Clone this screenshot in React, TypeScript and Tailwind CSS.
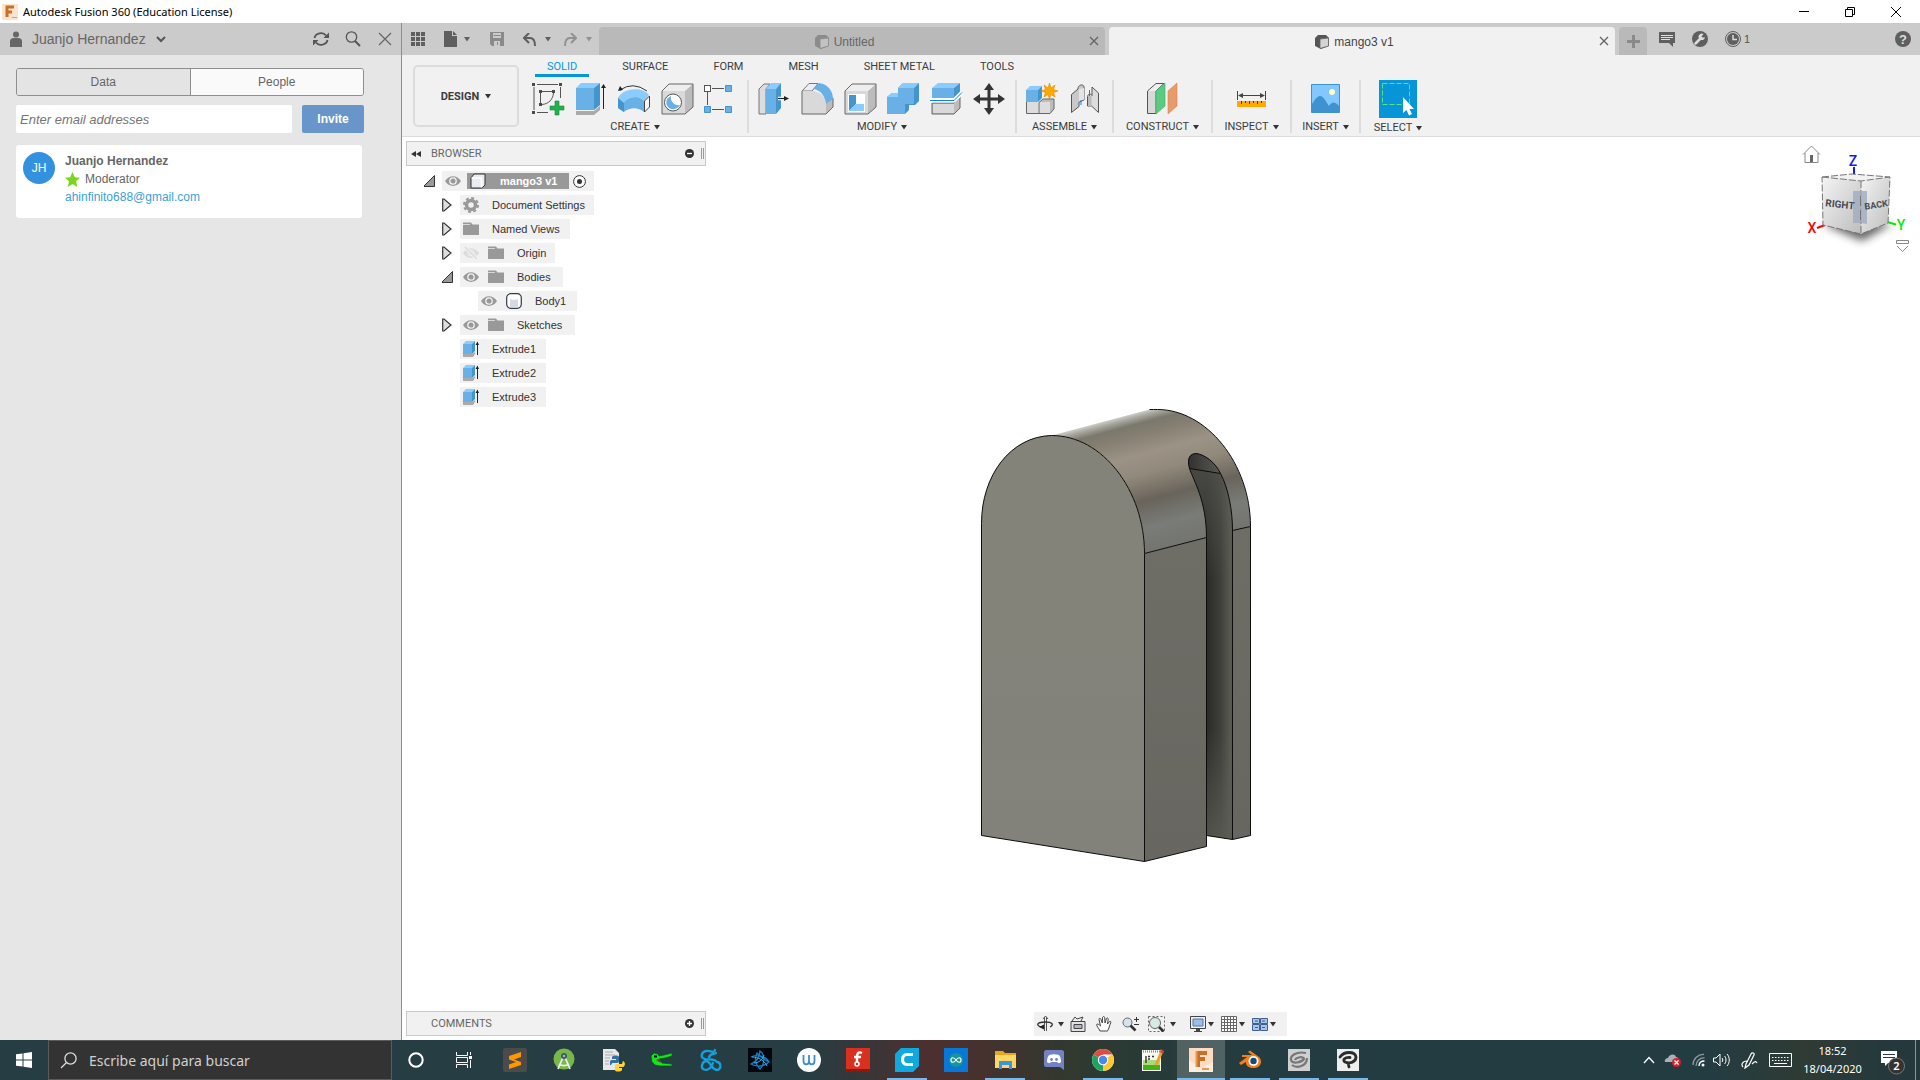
import React, { useState } from 'react';

type IconProps = { size?: number; w?: number; h?: number; className?: string; children: React.ReactNode };

// Every glyph is drawn on a grid of its own pixel size
const Ico = ({ size = 16, w, h, className = '', children }: IconProps) => (
  <svg
    width={w ?? size}
    height={h ?? size}
    viewBox={`0 0 ${w ?? size} ${h ?? size}`}
    className={`shrink-0 ${className}`}
    fill="none"
    aria-hidden="true"
  >
    {children}
  </svg>
);

const Caret = ({ className = 'text-[#333]' }: { className?: string }) => (
  <Ico w={6} h={5} className={className}>
    <path d="M0 0H6L3 4.500Z" fill="currentColor" />
  </Ico>
);

/* ---------- Ribbon icons ---------- */

const SketchIcon = () => (
  <Ico size={34}>
    <path d="M5 2.500H26M2 5V28M28.500 5V16M5 30.500H16M10 9.500H20M8.500 11V21M21.500 11C21 17 17 22 10 22.500" stroke="#555" />
    <path d="M0 1h3v3H0zM27 1h3v3h-3zM0 29h3v3H0zM7 8h3v3H7zM20 8h3v3h-3zM7 21h3v3H7z" fill="#4a4a4a" />
    <path d="M23 19h4v5h5v4h-5v5h-4v-5h-5v-4h5z" fill="#22b14c" stroke="#168a3a" strokeWidth=".6" />
  </Ico>
);

const ExtrudeIcon = () => (
  <Ico size={34}>
    <path d="M1 29H19L25 24V28L19 33H1Z" fill="#aaa" />
    <path d="M1 6H19V28H1Z" fill="#69b0e6" />
    <path d="M1 6L6 1H25L19 6Z" fill="#8accff" />
    <path d="M19 6L25 1V23L19 28Z" fill="#4494cd" />
    <path d="M28.500 4V27" stroke="#222" />
    <path d="M26 6L28.500 2L31 6Z" fill="#222" />
  </Ico>
);

const RevolveIcon = () => (
  <Ico size={34}>
    <path d="M0 16C6 5 25 5 31 13L26 19C21 13 11 14 5 21Z" fill="#8accff" />
    <path d="M5 21C11 14 21 13 26 19V30C20 25 12 25 6 30L0 26V16Z" fill="#69b0e6" />
    <path d="M0 16L6 21V30L0 26Z" fill="#4494cd" />
    <path d="M26.500 19L31.500 14V25L26.500 30Z" fill="#f7f7f7" stroke="#444" />
    <path d="M2 8Q15 -1 29 9" stroke="#333" />
    <path d="M0 9L2 4L5 8Z" fill="#222" />
  </Ico>
);

const Block = () => (
  <>
    <path d="M1 9L8 2H32L24 9Z" fill="#eee" />
    <path d="M1 9H24V32H1Z" fill="#d9d9d9" />
    <path d="M24 9L32 2V25L24 32Z" fill="#bcbcbc" />
    <path d="M1 9L8 2H32V25L24 32H1Z" stroke="#666" />
  </>
);

const HoleIcon = () => (
  <Ico size={34}>
    <Block />
    <circle cx="12" cy="20.500" r="8.500" fill="#fff" stroke="#555" />
    <path d="M10 14C5 16 4 21 7 25C11 29 17 27 19 23C14 24 9 20 10 14Z" fill="#69b0e6" />
  </Ico>
);

const PatternIcon = () => (
  <Ico size={34}>
    <path d="M8 6.500H20M8 27.500H20M3.500 10V23" stroke="#555" />
    <rect x=".5" y="3.500" width="6" height="6" fill="#fff" stroke="#555" />
    <path d="M21.500 3.500h6v6h-6zM21.500 24.500h6v6h-6zM.5 24.500h6v6h-6z" fill="#69b0e6" stroke="#4494cd" />
  </Ico>
);

const PressPullIcon = () => (
  <Ico size={34}>
    <path d="M1 7L6 2H12L8 7V32H1Z" fill="#ddd" stroke="#777" />
    <path d="M8 7H18V32H8Z" fill="#69b0e6" />
    <path d="M8 7L13 1H23L18 7Z" fill="#8accff" />
    <path d="M18 7L23 1V26L18 32Z" fill="#4494cd" />
    <path d="M20 16.500H27" stroke="#fff" strokeWidth="3.500" />
    <path d="M20 16.500H27" stroke="#222" strokeWidth="1.200" />
    <path d="M26 14L31 16.500L26 19Z" fill="#222" />
  </Ico>
);

const FilletIcon = () => (
  <Ico size={34}>
    <path d="M1 9L8 1.500H17L11 9Z" fill="#eee" stroke="#777" />
    <path d="M1 9H10C20 9 25 16 25 24V32H1Z" fill="#d9d9d9" />
    <path d="M25 22L32 15V25L25 32Z" fill="#bcbcbc" />
    <path d="M1 9V32H25L32 25V16" stroke="#666" />
    <path d="M12 7L18 1C27 2 32 9 32 17L25 22C24 14 20 8 12 7Z" fill="#69b0e6" />
  </Ico>
);

const ShellIcon = () => (
  <Ico size={34}>
    <Block />
    <path d="M4 12H21V30H4Z" fill="#fff" />
    <path d="M5 13H12V22L5 29Z" fill="#4494cd" />
    <path d="M12 22H20V29H5Z" fill="#8accff" />
  </Ico>
);

const CombineIcon = () => (
  <Ico size={34}>
    <path d="M0 15L5 11H11V6L16 1H32V19L28 23H22V28L18 32H0Z" fill="#4494cd" />
    <path d="M0 15H11V6H27V22H18V32H0Z" fill="#69b0e6" />
    <path d="M0 15L5 11H11V15ZM11 6L16 1H32L27 6Z" fill="#8accff" />
  </Ico>
);

const SplitIcon = () => (
  <Ico size={34}>
    <path d="M2 21H24L30 14V26L24 32H2Z" fill="#bcbcbc" stroke="#666" />
    <path d="M3 22H24V31H3Z" fill="#d9d9d9" />
    <path d="M2 6H24V16H2Z" fill="#69b0e6" />
    <path d="M2 6L8 1H30L24 6Z" fill="#8accff" />
    <path d="M24 6L30 1V11L24 16Z" fill="#4494cd" />
    <path d="M0 18.500H24L32 10.500" stroke="#fff" strokeWidth="4" />
    <path d="M0 18.500H24L32 10.500" stroke="#0a84dc" />
  </Ico>
);

const MoveIcon = () => (
  <Ico size={34}>
    <path d="M16 6V28M5 17H27" stroke="#333" strokeWidth="3" />
    <path d="M16 1L21 8H11ZM16 33L21 26H11ZM0 17L7 12V22ZM32 17L25 12V22Z" fill="#333" />
  </Ico>
);

const AssembleIcon = () => (
  <Ico size={34}>
    <path d="M0 20H12V32H0Z" fill="#ddd" />
    <path d="M13 20L17 17H28V27L24 32H13Z" fill="#bcbcbc" />
    <path d="M13 20H24V32H13Z" fill="#ddd" />
    <path d="M.5 20V31.500H24L28 27V17H17L13 20.500V31" stroke="#666" />
    <path d="M0 8H12V20H0Z" fill="#69b0e6" />
    <path d="M0 8L4 4H16L12 8Z" fill="#8accff" />
    <path d="M12 8L16 4V16L12 20Z" fill="#4494cd" />
    <path d="M23.500 1L25 6L29 3L27.500 7.500L32 9L27.500 10.500L29 15L25 12.500L23.500 17L22 12.500L18 15L19.500 10.500L15 9L19.500 7.500L18 3L22 6Z" fill="#ffa800" stroke="#e08a00" strokeWidth=".6" />
  </Ico>
);

const JointIcon = () => (
  <Ico size={34}>
    <path d="M2.500 12.500L9 7C9 2 15 2 15 5V18L10 20V24.500L2.500 30.500Z" fill="#c9c9c9" stroke="#555" />
    <path d="M10 7L15 6V17.500L10 19.500Z" fill="#e4e4e4" />
    <path d="M29.500 30.500L22.500 24H18.500V14.500C19 11.500 22 11.500 23 13.500V5L29.500 11Z" fill="#dcdcdc" stroke="#555" />
    <path d="M19 14H22.500V24H19Z" fill="#bbb" />
    <path d="M12 18V23M20.500 8V14" stroke="#0a84dc" />
  </Ico>
);

const ConstructIcon = () => (
  <Ico size={34}>
    <path d="M1.500 9L10 1.500H18L10 9V31.500H1.500Z" fill="#eee" stroke="#555" />
    <path d="M2 9H9V31H2Z" fill="#d9d9d9" />
    <path d="M10 9L19 1V24L10 32Z" fill="#5bcb82" stroke="#3da863" strokeWidth=".6" />
    <path d="M22 9L31 1V24L22 32Z" fill="#e99a6b" stroke="#d98453" strokeWidth=".6" />
  </Ico>
);

const InspectIcon = () => (
  <Ico size={34}>
    <path d="M2.500 9V18M30.500 9V18M4 13.500H29" stroke="#444" />
    <path d="M3 13.500L8 11V16ZM30 13.500L25 11V16Z" fill="#444" />
    <path d="M2 19H31V25H2Z" fill="#ffa800" />
    <path d="M6.500 19v3M10.500 19v2M14.500 19v3M18.500 19v2M22.500 19v3M26.500 19v2" stroke="#5a3c00" />
  </Ico>
);

const InsertIcon = () => (
  <Ico size={34}>
    <path d="M2.500 2.500H30.500V30.500H2.500Z" fill="#80c8ff" stroke="#3e92cf" />
    <path d="M3 22C7 16 9 14 11 14C15 14 18 22 20 24C23 20 25 19 30 24V30H3Z" fill="#3e92cf" />
    <circle cx="23" cy="10" r="3" fill="#ffffc8" />
  </Ico>
);

const SelectIcon = () => (
  <Ico size={38}>
    <path d="M0 0H38V38H0Z" fill="#0696d7" />
    <path d="M3.500 3.500H30.500V24.500H3.500Z" stroke="#5be08a" strokeDasharray="5 2" />
    <path d="M24 17V33L27.500 30L30 35.500L33 34L30.500 29H35Z" fill="#fff" />
  </Ico>
);

const RIBBON = [
  { label: 'CREATE', width: 'w-[226px]', icons: [SketchIcon, ExtrudeIcon, RevolveIcon, HoleIcon, PatternIcon] },
  { label: 'MODIFY', width: 'w-[268px]', icons: [PressPullIcon, FilletIcon, ShellIcon, CombineIcon, SplitIcon, MoveIcon] },
  { label: 'ASSEMBLE', width: 'w-[97px]', icons: [AssembleIcon, JointIcon] },
  { label: 'CONSTRUCT', width: 'w-[99px]', icons: [ConstructIcon] },
  { label: 'INSPECT', width: 'w-[79px]', icons: [InspectIcon] },
  { label: 'INSERT', width: 'w-[69px]', icons: [InsertIcon] },
  { label: 'SELECT', width: 'w-[74px]', icons: [SelectIcon] },
];

const WORKSPACE_TABS = ['SOLID', 'SURFACE', 'FORM', 'MESH', 'SHEET METAL', 'TOOLS'];

/* ---------- Browser tree icons ---------- */

const Eye = () => (
  <Ico className="text-[#999]">
    <path d="M0 8C4 1.500 12 1.500 16 8C12 14.500 4 14.500 0 8Z" fill="currentColor" />
    <circle cx="8" cy="8" r="3.200" stroke="#f1f1f1" strokeWidth="1.300" />
  </Ico>
);

const EyeOff = () => (
  <Ico className="text-[#dcdcdc]">
    <path d="M0 8C4 1.500 12 1.500 16 8C12 14.500 4 14.500 0 8Z" fill="currentColor" />
    <circle cx="8" cy="8" r="3" stroke="#f1f1f1" />
    <path d="M2 2L14 14" stroke="#f1f1f1" strokeWidth="3.500" />
    <path d="M2 2L14 14" stroke="currentColor" strokeWidth="1.500" />
  </Ico>
);

const Folder = () => (
  <Ico>
    <path d="M0 1.500H8L9.500 3.500H16V14H0Z" fill="#999" />
    <path d="M0 3.500H7" stroke="#d8d8d8" />
  </Ico>
);

const Gear = () => (
  <Ico>
    <circle cx="8" cy="8" r="4.500" stroke="#999" strokeWidth="3.500" />
    <circle cx="8" cy="8" r="7" stroke="#999" strokeWidth="2" strokeDasharray="3 2.500" />
  </Ico>
);

const Component = () => (
  <Ico>
    <path d="M1 5L4 1H15V12L12 15H1Z" fill="#e9ebf2" stroke="#333" />
    <path d="M1.500 5H11.500V14.500" stroke="#fff" strokeWidth="1.500" />
  </Ico>
);

const BodyIcon = () => (
  <Ico>
    <rect x=".7" y=".7" width="14.600" height="14.600" rx="4" fill="#fff" stroke="#333a4a" strokeWidth="1.200" />
    <path d="M4 6C6 7 10 7 12 6V14H4Z" fill="#d4d9e4" />
  </Ico>
);

const ExtrudeSmall = () => (
  <Ico>
    <path d="M0 13H9L12 11V13L10 16H0Z" fill="#aaa" />
    <path d="M0 3H9V13H0Z" fill="#69b0e6" />
    <path d="M0 3L3 0H12L9 3Z" fill="#8accff" />
    <path d="M9 3L12 0V10L9 13Z" fill="#4494cd" />
    <path d="M14.500 2V14" stroke="#222" />
    <path d="M12.500 4L14.500 .5L16 4Z" fill="#222" />
  </Ico>
);

const ArrowClosed = () => (
  <Ico w={12} h={14}>
    <path d="M.7 1H2L9 7L2 13H.7Z" fill="#ddd" stroke="#333" strokeWidth="1.200" />
  </Ico>
);

const ArrowOpen = () => (
  <Ico w={12} h={12}>
    <path d="M10.500 .5V11.500H-.5Z" fill="#999" stroke="#333" />
  </Ico>
);

type Node = { name: string; nested?: boolean; arrow?: 'open' | 'closed'; icons: React.FC[]; width: string };

const TREE: Node[] = [
  { name: 'Document Settings', arrow: 'closed', icons: [Gear], width: 'w-[134px]' },
  { name: 'Named Views', arrow: 'closed', icons: [Folder], width: 'w-[110px]' },
  { name: 'Origin', arrow: 'closed', icons: [EyeOff, Folder], width: 'w-[95px]' },
  { name: 'Bodies', arrow: 'open', icons: [Eye, Folder], width: 'w-[103px]' },
  { name: 'Body1', nested: true, icons: [Eye, BodyIcon], width: 'w-[99px]' },
  { name: 'Sketches', arrow: 'closed', icons: [Eye, Folder], width: 'w-[115px]' },
  { name: 'Extrude1', icons: [ExtrudeSmall], width: 'w-[86px]' },
  { name: 'Extrude2', icons: [ExtrudeSmall], width: 'w-[86px]' },
  { name: 'Extrude3', icons: [ExtrudeSmall], width: 'w-[86px]' },
];

const TitleBar = () => (
  <header className="flex h-[23px] shrink-0 items-center bg-white pr-px font-['Noto_Sans','Open_Sans',sans-serif]">
    <Ico className="ml-[2px] mr-[5px]">
      <path d="M0 0H16V16H0Z" fill="#fbe3cd" />
      <path d="M5 13V3H12M5 8H10" stroke="#c8702a" strokeWidth="3" />
      <path d="M10 13.500H15" stroke="#e79b52" />
    </Ico>
    <h1 className="flex-1 text-[11px] leading-none text-black">Autodesk Fusion 360 (Education License)</h1>
    <button aria-label="Minimize" className="flex w-[46px] justify-center">
      <Ico size={10}><path d="M0 4.500H10" stroke="#000" /></Ico>
    </button>
    <button aria-label="Restore" className="flex w-[46px] justify-center">
      <Ico size={10}><path d="M.5 2.500H7.500V9.500H.5ZM2.500 2.500V.5H9.500V7.500H7.500" stroke="#000" /></Ico>
    </button>
    <button aria-label="Close" className="flex w-[46px] justify-center">
      <Ico size={10}><path d="M0 0L10 10M10 0L0 10" stroke="#000" /></Ico>
    </button>
  </header>
);

const PeoplePanel = () => {
  const [tab, setTab] = useState('People');

  return (
    <aside className="w-[402px] shrink-0 border-r border-[#8e8e8e] bg-[#e6e6e6] text-[#666]">
      <div className="flex h-8 items-center bg-[#cbcbcb] pl-[10px] pr-2">
        <Ico w={12} h={16}>
          <circle cx="6" cy="3.500" r="3" fill="#666" />
          <path d="M0 16V10C0 8 2 7 3.500 7H8.500C10 7 12 8 12 10V16Z" fill="#666" />
        </Ico>
        <button className="ml-[10px] flex items-center gap-[10px] text-sm">
          Juanjo Hernandez
          <Ico w={10} h={7}><path d="M1 1L5 5L9 1" stroke="#555" strokeWidth="2" /></Ico>
        </button>
        <div className="ml-auto flex items-center gap-4">
          <button aria-label="Refresh">
            <Ico>
              <path d="M1.500 7C2.500 2 10 .5 13 4.500M14.500 9C13.500 14 6 15.500 3 11.500" stroke="#555" strokeWidth="1.800" />
              <path d="M16 1.500V7H10.500ZM0 14.500V9H5.500Z" fill="#555" />
            </Ico>
          </button>
          <button aria-label="Search">
            <Ico>
              <circle cx="6.500" cy="6" r="5.200" stroke="#555" strokeWidth="1.300" />
              <path d="M10 10L15 15" stroke="#555" strokeWidth="2" />
            </Ico>
          </button>
          <button aria-label="Close panel">
            <Ico><path d="M2 2L14 14M14 2L2 14" stroke="#666" strokeWidth="1.200" /></Ico>
          </button>
        </div>
      </div>

      <div className="px-4 pt-[13px]">
        <div className="mr-[21px] flex h-7 overflow-hidden rounded-[3px] border border-[#8e8e8e] text-xs">
          {['Data', 'People'].map((t) => (
            <button
              key={t}
              onClick={() => setTab(t)}
              className={`flex-1 ${t === 'People' ? 'border-l border-[#8e8e8e]' : ''} ${tab === t ? 'bg-[#fafafa]' : 'bg-[#e4e4e4]'}`}
            >
              {t}
            </button>
          ))}
        </div>
        <form className="mr-[21px] mt-[9px] flex h-7 gap-[10px]" onSubmit={(e) => e.preventDefault()}>
          <input
            type="email"
            aria-label="Enter email addresses"
            placeholder="Enter email addresses"
            className="min-w-0 flex-1 rounded-[2px] bg-white px-1 pt-px text-[13px] italic placeholder:text-[#757575]"
          />
          <button className="w-[62px] rounded-[2px] bg-[#6996ca] text-xs font-bold text-white">Invite</button>
        </form>
        <div className="mr-[23px] mt-3 flex h-[73px] rounded-[3px] bg-white pl-[7px] pt-[7px] text-xs leading-[18px]">
          <div className="flex size-8 items-center justify-center rounded-full bg-[#3392df] text-white">JH</div>
          <div className="ml-[10px]">
            <p className="font-bold">Juanjo Hernandez</p>
            <p className="flex items-center gap-[5px]">
              <Ico size={15}>
                <path d="M7.500 0L9.800 5.200L15 5.700L11 9.300L12.300 15L7.500 11.900L2.700 15L4 9.300L0 5.700L5.200 5.200Z" fill="#7ad51c" />
              </Ico>
              Moderator
            </p>
            <a href="mailto:ahinfinito688@gmail.com" className="text-[#3c9fd9]">ahinfinito688@gmail.com</a>
          </div>
        </div>
      </div>
    </aside>
  );
};

const DocIcon = ({ dark }: { dark?: boolean }) => (
  <Ico>
    <path d="M1 4L4 1H12L15 4V12L7 15L1 12Z" fill={dark ? '#555' : '#8b8b8b'} />
    <path d="M6 5L14.500 4V12L6 14.500Z" fill={dark ? '#d4d4d4' : '#c2c2c2'} stroke={dark ? '#666' : '#8b8b8b'} strokeWidth=".8" />
  </Ico>
);

const CloseX = () => (
  <Ico size={10}><path d="M1 1L9 9M9 1L1 9" stroke="#666" strokeWidth="1.400" /></Ico>
);

const QuickBar = () => (
  <div className="flex h-8 shrink-0 items-center bg-[#cbcbcb] pl-[9px]">
    <div className="flex w-[188px] shrink-0 items-center">
      <button aria-label="Data panel">
        <Ico size={14}>
          <path d="M0 0h4v4H0zM5 0h4v4H5zM10 0h4v4h-4zM0 5h4v4H0zM5 5h4v4H5zM10 5h4v4h-4zM0 10h4v4H0zM5 10h4v4H5zM10 10h4v4h-4z" fill="#5f5f5f" />
        </Ico>
      </button>
      <button aria-label="File" className="ml-[19px] flex items-center gap-[7px]">
        <Ico w={13} h={16}><path d="M0 0H8V5H13V16H0ZM9 0L13 4H9Z" fill="#5f5f5f" /></Ico>
        <Caret className="text-[#5f5f5f]" />
      </button>
      <button aria-label="Save" className="ml-5">
        <Ico size={14}>
          <path d="M0 0H14V14H2L0 12Z" fill="#8a8a8a" />
          <path d="M3 1H11V6H3ZM4 9H10V14H4Z" fill="#cbcbcb" />
          <path d="M3.500 3.500H10.500M7.500 10V13" stroke="#8a8a8a" />
        </Ico>
      </button>
      <button aria-label="Undo" className="ml-[19px] flex items-center gap-[9px]">
        <Ico size={13}>
          <path d="M2 5H7C11 5 12 8 12 13" stroke="#5f5f5f" strokeWidth="2" />
          <path d="M6 0L1 5L6 10" stroke="#5f5f5f" strokeWidth="2" />
        </Ico>
        <Caret className="text-[#5f5f5f]" />
      </button>
      <button aria-label="Redo" className="ml-[13px] flex items-center gap-[9px]">
        <Ico size={13}>
          <path d="M11 5H6C2 5 1 8 1 13" stroke="#929292" strokeWidth="2" />
          <path d="M7 0L12 5L7 10" stroke="#929292" strokeWidth="2" />
        </Ico>
        <Caret className="text-[#929292]" />
      </button>
    </div>

    <div className="flex h-7 min-w-0 flex-1 gap-1 self-end text-xs text-[#555]">
      <div className="flex flex-1 items-center rounded-t-[4px] bg-[#b9b9b9] pr-[6px]">
        <button className="flex flex-1 items-center justify-center gap-1 pt-px text-[#666]"><DocIcon />Untitled</button>
        <button aria-label="Close Untitled"><CloseX /></button>
      </div>
      <div className="flex flex-1 items-center rounded-t-[4px] bg-[#f1f1f1] pr-[6px]">
        <button className="flex flex-1 items-center justify-center gap-1 pt-px text-[#444]"><DocIcon dark />mango3 v1</button>
        <button aria-label="Close mango3 v1"><CloseX /></button>
      </div>
    </div>
    <button aria-label="New tab" className="ml-1 flex h-7 w-7 shrink-0 items-center justify-center self-end rounded-t-[4px] bg-[#b9b9b9]">
      <Ico size={13}><path d="M6.500 0V13M0 6.500H13" stroke="#8a8a8a" strokeWidth="3" /></Ico>
    </button>
    <div className="flex w-[273px] shrink-0 items-center pl-3 pr-[9px] text-[11px] text-[#555]">
      <button aria-label="Comments">
        <Ico>
          <path d="M0 1H16V12H14V16L10 12H0Z" fill="#5f5f5f" />
          <path d="M2 4.500H14M2 6.500H14M2 8.500H11" stroke="#ddd" />
        </Ico>
      </button>
      <button aria-label="Tools" className="ml-[17px]">
        <Ico>
          <circle cx="8" cy="8" r="8" fill="#5f5f5f" />
          <path d="M3.500 12.500L9 7" stroke="#ddd" strokeWidth="2.500" strokeLinecap="round" />
          <path d="M11.500 3A3.300 3.300 0 1 0 13 6.500L10.500 6.500L9.500 5.500Z" fill="#ddd" />
        </Ico>
      </button>
      <button className="ml-[17px] flex items-center gap-[3px]">
        <Ico>
          <circle cx="8" cy="8" r="7.500" stroke="#5f5f5f" />
          <circle cx="8" cy="8" r="6" fill="#5f5f5f" />
          <path d="M8 4V8.500H12" stroke="#ddd" strokeWidth="1.500" />
        </Ico>
        1
      </button>
      <button aria-label="Help" className="ml-auto flex size-4 items-center justify-center rounded-full bg-[#5f5f5f] text-[13px] leading-none font-bold text-[#ddd]">?</button>
    </div>
  </div>
);

const Ribbon = () => (
  <div className="flex h-[82px] shrink-0 border-b border-[#dcdcdc] bg-[#f1f1f1] pl-[11px] font-[Roboto,sans-serif] text-[11px] leading-3 text-[#3c3c3c]">
    <button className="mt-[10px] flex h-[62px] w-[106px] shrink-0 items-center justify-center gap-[6px] rounded-[5px] border-2 border-[#dcdcdc] pt-px font-bold">
      DESIGN <Caret />
    </button>
    <div className="pl-1">
      <nav className="ml-3 flex gap-[21px]">
        {WORKSPACE_TABS.map((t) => (
          <button
            key={t}
            className={`h-[22px] border-b-[3px] px-3 pt-1 ${t === 'SOLID' ? 'border-[#0696d7] text-[#0696d7]' : 'border-transparent'}`}
          >
            {t}
          </button>
        ))}
      </nav>
      <div className="mt-[3px] flex">
        {RIBBON.map(({ label, width, icons }, i) => (
          <section
            key={label}
            className={`flex h-[53px] flex-col items-center border-[#dcdcdc] ${width} ${i < RIBBON.length - 1 ? 'border-r-2' : ''}`}
          >
            <div className="flex h-[38px] items-center gap-[9px]">
              {icons.map((Icon, n) => (
                <button key={n} aria-label={`${label} ${n + 1}`}>
                  <Icon />
                </button>
              ))}
            </div>
            <button className="mt-1 flex items-center gap-1">
              {label} <Caret />
            </button>
          </section>
        ))}
      </div>
    </div>
  </div>
);

const PanelBar = ({ title, open }: { title: string; open?: boolean }) => (
  <div className="flex h-[25px] w-[300px] items-center border border-[#c9c9c9] bg-[#f1f1f1] font-[Roboto,sans-serif] text-[11px] text-[#666]">
    <div className="w-6 pl-1">
      {open && (
        <Ico w={10} h={6}><path d="M5 0V6L0 3ZM10 0V6L5 3Z" fill="#333" /></Ico>
      )}
    </div>
    <h2 className="flex-1 pt-px">{title}</h2>
    <button aria-label={open ? 'Collapse' : 'Expand'}>
      <Ico size={9}>
        <circle cx="4.500" cy="4.500" r="4.500" fill="#333" />
        <path d={open ? 'M2 4.500H7' : 'M2 4.500H7M4.500 2V7'} stroke="#fff" strokeWidth="1.300" />
      </Ico>
    </button>
    <div className="ml-[7px] mr-px h-[11px] w-[3px] border-x border-[#999]" />
  </div>
);

const BrowserTree = () => (
  <div className="pl-[18px] pt-[5px] text-[11px] text-[#333]">
    <div className="mb-1 flex h-5 items-center">
      <div className="w-[18px]"><ArrowOpen /></div>
      <div className="flex h-5 w-[152px] items-center bg-[#f1f1f1] pl-[3px]">
        <Eye />
        <button className="ml-[6px] flex h-4 w-[102px] items-center bg-[#999] pl-[3px] font-bold text-white">
          <Component />
          <span className="ml-[14px]">mango3 v1</span>
        </button>
        <Ico size={13} className="ml-1">
          <circle cx="6.500" cy="6.500" r="5.900" stroke="#333" fill="#fff" />
          <circle cx="6.500" cy="6.500" r="2.500" fill="#333" />
        </Ico>
      </div>
    </div>
    {TREE.map((node) => (
      <div key={node.name} className={`mb-1 flex h-5 items-center ${node.nested ? 'pl-[54px]' : 'pl-[18px]'}`}>
        {!node.nested && (
          <div className="w-[18px]">
            {node.arrow === 'closed' && <ArrowClosed />}
            {node.arrow === 'open' && <ArrowOpen />}
          </div>
        )}
        <button className={`flex h-5 items-center bg-[#f1f1f1] pl-[3px] text-left whitespace-nowrap ${node.width}`}>
          {node.icons.map((Icon, n) => (
            <span key={n} className="mr-[9px]"><Icon /></span>
          ))}
          <span className="ml-1">{node.name}</span>
        </button>
      </div>
    ))}
  </div>
);

// Handle with the rounded top and the vertical slot on its right side
const Model = () => (
  <svg width="276" height="462" viewBox="0 0 276 462" fill="none" className="absolute top-[268px] left-[575px]" role="img" aria-label="mango3 body">
    <defs>
      <linearGradient id="dome" gradientUnits="userSpaceOnUse" x1="130" y1="15" x2="166" y2="149">
        <stop offset="0" stopColor="#cfcfca" />
        <stop offset=".03" stopColor="#a9a9a0" />
        <stop offset=".08" stopColor="#7a786c" />
        <stop offset=".17" stopColor="#878073" />
        <stop offset=".3" stopColor="#9c9386" />
        <stop offset=".44" stopColor="#91897b" />
        <stop offset=".63" stopColor="#69645b" />
        <stop offset=".82" stopColor="#7a7c78" />
        <stop offset="1" stopColor="#73746f" />
      </linearGradient>
      <linearGradient id="slot" gradientUnits="userSpaceOnUse" x1="229" y1="0" x2="256" y2="0">
        <stop offset="0" stopColor="#2a2a28" />
        <stop offset=".5" stopColor="#3d3d39" />
        <stop offset=".9" stopColor="#5b5b54" />
        <stop offset="1" stopColor="#4c4c47" />
      </linearGradient>
      <linearGradient id="slotFade" x1="0" y1="0" x2="0" y2="1">
        <stop offset="0" stopColor="#5d5d56" stopOpacity=".6" />
        <stop offset=".3" stopColor="#5d5d56" stopOpacity="0" />
        <stop offset=".7" stopColor="#5d5d56" stopOpacity="0" />
        <stop offset="1" stopColor="#5d5d56" stopOpacity=".8" />
      </linearGradient>
      <linearGradient id="side" x1="0" y1="0" x2="0" y2="1">
        <stop offset="0" stopColor="#6e6d66" />
        <stop offset="1" stopColor="#676660" />
      </linearGradient>
      <linearGradient id="face" x1="0" y1="0" x2="0" y2="1">
        <stop offset=".5" stopColor="#84837a" />
        <stop offset="1" stopColor="#82817b" />
      </linearGradient>
      <linearGradient id="slotTop" x1="0" y1="0" x2="1" y2="0">
        <stop offset="0" stopColor="#31312f" />
        <stop offset="1" stopColor="#5a5a54" />
      </linearGradient>
    </defs>
    <g transform="translate(.5 .5)">
      <path d="M74 30L168 5C172 4 176 4 180 4C229 4 273 58 273 121L167 148C167 85 125 30 74 30Z" fill="url(#dome)" />
      <path d="M167 148L229 132V441L167 456Z" fill="url(#side)" />
      <path d="M255 125L273 121V430L255 434Z" fill="url(#side)" />
      <path d="M229 132C229 95 216 75 212 63C209 52 213 48 219 48C227 49 238 57 243 68C251 83 255 105 255 125V434L229 430Z" fill="url(#slot)" />
      <path d="M229 132C229 95 216 75 212 63L243 68C251 83 255 105 255 125V434L229 430Z" fill="url(#slotFade)" />
      <path d="M212 63C209 52 213 48 219 48C227 49 238 57 243 68Z" fill="url(#slotTop)" />
      <path d="M4 118C4 70 33 31 74 30C125 30 167 85 167 148V456L4 430Z" fill="url(#face)" />
      <g stroke="#0c0c0c">
        <path d="M4 118C4 70 33 31 74 30C125 30 167 85 167 148V456L4 430Z" />
        <path d="M172 4C175 4 177 4 180 4C229 4 273 58 273 121V430L255 434L229 430" />
        <path d="M167 148L229 132C229 95 216 75 212 63C209 52 213 48 219 48C227 49 238 57 243 68C251 83 255 105 255 125L273 121M255 125V434M229 132V441L167 456M212 63L243 68" />
      </g>
    </g>
  </svg>
);

const ViewCube = () => (
  <svg width="120" height="120" viewBox="0 0 120 120" fill="none" className="absolute top-[3px] right-0 font-[Roboto,sans-serif]" role="img" aria-label="View cube">
    <defs>
      <filter id="soft" x="-50%" y="-50%" width="200%" height="200%"><feGaussianBlur stdDeviation="4" /></filter>
      <linearGradient id="cubeL" x1="0" y1="0" x2="1" y2="1">
        <stop offset="0" stopColor="#f4f4f4" />
        <stop offset="1" stopColor="#bdbdbd" />
      </linearGradient>
    </defs>
    <path d="M3 14.500L11.500 6L20 14.500M5 13V22.500H18V13" stroke="#888" />
    <path d="M10 15H13V22H10Z" fill="#666" />
    <path d="M22 84L60 80L92 84L62 101Z" fill="#333" opacity=".75" filter="url(#soft)" />
    <path d="M54 27V35" stroke="#1414ff" strokeWidth="2" />
    <path d="M17 88L25 85" stroke="#f00" strokeWidth="2" />
    <path d="M87 82L96 84.500" stroke="#0e0" strokeWidth="2" />
    <path d="M22 37L52 34L90 37L61 41Z" fill="#f2f2f2" />
    <path d="M22 37L61 41V94L23 85Z" fill="url(#cubeL)" />
    <path d="M61 41L90 37L88 83L61 94Z" fill="url(#cubeL)" />
    <path d="M22 37L52 34L90 37L88 83L61 94L23 85ZM22 37L61 41L90 37M61 41V94" stroke="#777" strokeDasharray="7 2" />
    <path d="M53 51H67V84L61 83H53Z" fill="#a0adbd" opacity=".8" />
    <path d="M60.500 56V66M60.500 70V80" stroke="#777" />
    <g fontWeight="700" textAnchor="middle" fill="#454c56">
      <text x="40" y="68" fontSize="10" transform="rotate(6 41 64)">RIGHT</text>
      <text x="76" y="68" fontSize="9" transform="rotate(-9 76 64)">BACK</text>
    </g>
    <g fontSize="14" fontWeight="500" textAnchor="middle">
      <text x="53" y="26" fill="#1414ff">Z</text>
      <text x="12" y="93" fill="#f00">X</text>
      <text x="101" y="90" fill="#0e0">Y</text>
    </g>
    <path d="M96.500 100.500H108.500V103.500H96.500ZM97 106L102.500 111.500L108 106" stroke="#888" />
  </svg>
);

const NavBar = () => (
  <div className="flex h-6 w-[253px] items-center bg-[#f1f1f1] pl-[3px]">
    <button aria-label="Orbit" className="mr-[6px] flex items-center gap-[5px]">
      <Ico>
        <path d="M7.500 1V15M9.500 1V15M6 3L8.500 0L11 3" stroke="#555" />
        <path d="M4 11C-2 9 1 6 8 6C16 6 17 9 13 11" stroke="#333" strokeWidth="1.300" />
        <path d="M2 11L7 8.500V13.500Z" fill="#222" />
      </Ico>
      <Caret />
    </button>
    <button aria-label="Look at" className="mr-[10px]">
      <Ico>
        <path d="M1 5.500H15V15.500H1Z" fill="#e2e2e6" stroke="#444" />
        <path d="M4 8.500H12V12.500H4Z" fill="#b4b8c4" stroke="#444" />
        <path d="M2 5L5 1L7 3L13 1L11 5" stroke="#444" />
      </Ico>
    </button>
    <button aria-label="Pan" className="mr-[10px]">
      <Ico>
        <path d="M4 15C3 12 0 10 .8 8.300C2 7.500 3.500 9 4.500 10L3 3.500C3 2 4.500 2 5 3.500L6.300 7L6.500 1.500C7 .3 8.500 .3 8.700 1.500L9 7L10.500 2.500C11 1.500 12.300 2 12.200 3.200L11.500 8L13.500 5.500C14.500 5 15.300 5.800 14.800 6.700C13.500 9 13 13 11.500 15Z" fill="#fff" stroke="#444" />
      </Ico>
    </button>
    <button aria-label="Zoom" className="mr-[9px]">
      <Ico w={17} h={16}>
        <circle cx="5.500" cy="6.500" r="4.500" fill="#d5e4ea" stroke="#666" />
        <path d="M8.500 9.500L13.500 14.500" stroke="#333" strokeWidth="2.600" />
        <path d="M12 3.500H17M14.500 1V6M12 8.500H17" stroke="#333" />
      </Ico>
    </button>
    <button aria-label="Fit" className="mr-[14px] flex items-center gap-[5px]">
      <Ico w={17} h={16}>
        <path d="M.5 .5H16.500V15.500H.5Z" stroke="#666" strokeDasharray="2 2" />
        <circle cx="7" cy="7" r="5.500" fill="#d5ece6" stroke="#666" />
        <path d="M11 11L15.500 15.500" stroke="#333" strokeWidth="2.600" />
      </Ico>
      <Caret />
    </button>
    <button aria-label="Display settings" className="mr-[7px] flex items-center gap-[2px]">
      <Ico>
        <path d="M.5 .5H15.500V12.500H.5Z" fill="#eee" stroke="#444" />
        <path d="M3 3H13V10H3Z" fill="#9dbde6" stroke="#5176a8" />
        <path d="M6 13H10V15H12V16H4V15H6Z" fill="#444" />
      </Ico>
      <Caret />
    </button>
    <button aria-label="Grid and snaps" className="mr-[7px] flex items-center gap-[2px]">
      <Ico>
        <path d="M.5 .5H15.500V15.500H.5Z" fill="#fff" />
        <path d="M.5 .5H15.500V15.500H.5ZM3.500 0V16M6.500 0V16M9.500 0V16M12.500 0V16M0 3.500H16M0 6.500H16M0 9.500H16M0 12.500H16" stroke="#666" />
      </Ico>
      <Caret />
    </button>
    <button aria-label="Viewports" className="flex items-center gap-[2px]">
      <Ico>
        <path d="M.5 2.500H7.500V7.500H.5ZM8.500 2.500H15.500V7.500H8.500ZM.5 8.500H7.500V14.500H.5ZM8.500 8.500H15.500V14.500H8.500Z" fill="#a9c4ea" stroke="#3f5f90" />
        <path d="M3 5H6M10 5H13M3 11.500H6M10 11.500H13" stroke="#3f5f90" />
      </Ico>
      <Caret />
    </button>
  </div>
);

/* ---------- Taskbar ---------- */

const Sublime = () => (
  <Ico size={24}>
    <rect width="24" height="24" rx="2" fill="#4b4b4b" />
    <path d="M18 4V9L11 11.500L18 14V17L6 21V16.500L13 14L6 11.500V8Z" fill="#ff9800" />
  </Ico>
);
const AndroidStudio = () => (
  <Ico size={24}>
    <circle cx="12" cy="11" r="10.500" fill="#78b84a" />
    <path d="M12 7L6 21M12 7L18 21M7 16C10 18 14 18 17 16" stroke="#e8eef0" strokeWidth="1.800" />
    <circle cx="12" cy="8" r="3" fill="#455a64" />
    <circle cx="12" cy="8" r="1" fill="#cfd8dc" />
  </Ico>
);
const Python = () => (
  <Ico size={24}>
    <path d="M2 1H14L18 5V22H2Z" fill="#e8e8e8" />
    <path d="M4 4H12M4 7H14M4 10H9M4 13H8M4 16H8" stroke="#aaa" />
    <path d="M9 17V14C9 12 10 12 12 12H15V11H11V9C12 7 18 7 18 9V13C18 15 17 15 15 15H12C10 15 11 18 9 17Z" fill="#3670a0" />
    <path d="M22 13C25 14 24 19 22 19H17V20H21V22C20 24 14 24 14 22V18C14 16 15 16 17 16H20C22 16 21 15 22 13Z" fill="#ffd43b" />
  </Ico>
);
const Croc = () => (
  <Ico size={24}>
    <path d="M1 8L4 5L8 6L9 8L14 7L22 5L22 8L15 10L9 11L12 15L22 16L22 18L10 18L5 17L2 14Z" fill="#12e812" stroke="#052" strokeWidth=".7" />
    <path d="M9 11L12 15L16 16L9 14L6 12Z" fill="#a0187a" />
    <path d="M4 8.500H7" stroke="#012" strokeWidth="2" />
  </Ico>
);
const Knot = () => (
  <Ico size={24}>
    <path d="M16 2C15 6 11 2 7 3C2 4 1 10 6 11C10 12 15 10 18 14C22 14 23 21 18 22C13 22 13 16 8 13C3 13 1 20 5 21.500C9 23 13 19 14 15M10 9C12 4 16 7 17 5" stroke="#14a0dc" strokeWidth="2.300" strokeLinecap="round" />
  </Ico>
);
const BattleNet = () => (
  <Ico size={24}>
    <path d="M0 0H24V24H0Z" fill="#05070c" />
    <path d="M3 9C8 6 18 8 21 14C16 19 8 19 3 16C8 14 12 9 12 3C17 6 17 16 12 21C8 17 6 11 9 5C13 9 18 13 21 14" stroke="#1480c8" strokeWidth="1.300" />
    <path d="M4 9C10 9 16 12 19 18M6 15C10 15 15 12 16 7" stroke="#39b4f0" />
  </Ico>
);
const Wacom = () => (
  <Ico size={24}>
    <circle cx="12" cy="12" r="12" fill="#fff" />
    <path d="M6.500 7V13C6.500 17.500 12 17.500 12 13V7M12 13C12 17.500 17.500 17.500 17.500 13V7" stroke="#3f8fc4" strokeWidth="1.800" />
  </Ico>
);
const Fritzing = () => (
  <Ico size={24}>
    <path d="M0 0H24V24H0Z" fill="#d9301f" />
    <path d="M0 21H24V24H0Z" fill="#8e180d" />
    <path d="M16 5C12 3 11 6 11 9V14M8 9H15" stroke="#fff" strokeWidth="2.400" />
    <circle cx="11" cy="16" r="2" stroke="#fff" strokeWidth="1.500" />
  </Ico>
);
const Cura = () => (
  <Ico size={24}>
    <path d="M6 0H24V18L18 24H0V6Z" fill="#0fa8e0" />
    <path d="M18 6.500H12C6 6.500 6 16.500 12 16.500H18" stroke="#fff" strokeWidth="3.200" />
  </Ico>
);
const Arduino = () => (
  <Ico size={24}>
    <path d="M0 0H24V24H0Z" fill="#0878d8" />
    <circle cx="12" cy="12" r="7" fill="#16959b" />
    <path d="M12 12C10 9 7 9 7 12S10 15 12 12S17 9 17 12S14 15 12 12Z" stroke="#fff" strokeWidth="1.200" />
  </Ico>
);
const Explorer = () => (
  <Ico size={24}>
    <path d="M2 3H10L12 5H23V20H2Z" fill="#e9a51c" />
    <path d="M2 7H23V20H2Z" fill="#ffd766" />
    <path d="M6 13H19V21H16V17H9V21H6Z" fill="#3c96dc" />
  </Ico>
);
const Discord = () => (
  <Ico size={24}>
    <path d="M4 2H20C21 2 22 3 22 4V22L18 19H4C3 19 2 18 2 17V4C2 3 3 2 4 2Z" fill="#7382c4" />
    <path d="M7 7C10 6 14 6 17 7C19 10 19 12 19 14C17 16 16 15 15 14H9C8 15 7 16 5 14C5 12 5 10 7 7Z" fill="#fff" />
    <circle cx="9.500" cy="11.500" r="1.400" fill="#7382c4" />
    <circle cx="14.500" cy="11.500" r="1.400" fill="#7382c4" />
  </Ico>
);
const Chrome = () => (
  <Ico size={24}>
    <circle cx="12" cy="12" r="11" fill="#fff" />
    <path d="M12 12L2.500 6.500A11 11 0 0 1 21.500 6.500H12Z" fill="#de4c3c" />
    <path d="M12 12L21.500 6.500A11 11 0 0 1 12 23Z" fill="#fcc934" />
    <path d="M12 12L12 23A11 11 0 0 1 2.500 6.500Z" fill="#1da462" />
    <circle cx="12" cy="12" r="5.200" fill="#fff" />
    <circle cx="12" cy="12" r="4.200" fill="#4687f4" />
  </Ico>
);
const NotepadPP = () => (
  <Ico size={24}>
    <path d="M2 2H21V23H2Z" fill="#f7f9f2" />
    <path d="M3 12H20V22H3Z" fill="#a8dc7a" />
    <path d="M3 17H20V22H3Z" fill="#46b014" />
    <path d="M3 3.500H20" stroke="#888" strokeDasharray="1 1" strokeWidth="2" />
    <path d="M6 8V15M8 8.500H10M8 11H10M12 8.500H14" stroke="#333" strokeWidth="1.400" />
    <path d="M22 3L16 17" stroke="#f0a024" strokeWidth="3" />
    <path d="M21 1L24 3L23 6L20 4Z" fill="#d8453a" />
  </Ico>
);
const Fusion = () => (
  <Ico size={24}>
    <path d="M0 0H24V24H0Z" fill="#fbdcc0" />
    <path d="M0 24V12L12 20L24 14V24Z" fill="#fdeee0" />
    <path d="M9 19V5H18M9 11H16" stroke="#c46f2b" strokeWidth="4" />
    <path d="M7.500 3V19" stroke="#e79b52" strokeWidth="2" />
    <path d="M13 21H20" stroke="#e79b52" strokeWidth="2" />
  </Ico>
);
const Blender = () => (
  <Ico size={24}>
    <path d="M1 15L9 9H4V7H14L10 4L12 2.500L21 9C25 13 23 20 15.500 20C10 20 7.500 17 8 14L3 17Z" fill="#f57f17" />
    <circle cx="15.500" cy="13" r="5" fill="#fff" />
    <circle cx="15.500" cy="13" r="3.200" fill="#134a80" />
  </Ico>
);
const ClipGray = () => (
  <Ico size={24}>
    <path d="M1 1H23V23H1Z" fill="#cfcfcf" />
    <path d="M19 5C9 3 3 8 4 12C5 16 14 15 17 11C17 8 9 9 8 12M5 17C10 21 20 18 20 10" stroke="#777" strokeWidth="2.200" />
  </Ico>
);
const ClipDark = () => (
  <Ico size={24}>
    <path d="M1 1H23V23H1Z" fill="#eee" />
    <path d="M4 9C8 3 19 3 20 9C20 14 14 16 9 14C6 12 9 9 14 9.500M12 15L13 19" stroke="#2c2c2c" strokeWidth="2.800" strokeLinecap="round" />
  </Ico>
);

const APPS = [
  { name: 'Sublime Text', icon: Sublime },
  { name: 'Android Studio', icon: AndroidStudio },
  { name: 'Python', icon: Python },
  { name: 'CrocodileClips', icon: Croc },
  { name: 'Knot', icon: Knot },
  { name: 'Battle.net', icon: BattleNet },
  { name: 'Wacom', icon: Wacom },
  { name: 'Fritzing', icon: Fritzing },
  { name: 'Cura', icon: Cura, open: true },
  { name: 'Arduino', icon: Arduino },
  { name: 'Explorer', icon: Explorer, open: true },
  { name: 'Discord', icon: Discord },
  { name: 'Chrome', icon: Chrome, open: true },
  { name: 'Notepad++', icon: NotepadPP },
  { name: 'Fusion 360', icon: Fusion, open: true, active: true },
  { name: 'Blender', icon: Blender, open: true },
  { name: 'Clip Studio', icon: ClipGray, open: true },
  { name: 'Clip Studio Paint', icon: ClipDark, open: true },
];

const Taskbar = () => (
  <footer className="flex h-10 shrink-0 bg-[linear-gradient(90deg,#263d43_0%,#263d43_42%,#373638_45%,#4c3030_48%,#46312e_51%,#33382e_55%,#273b38_60%,#233c42_66%,#233c42_89%,#2f3b34_94%,#25393c_98%)] font-['Noto_Sans','Open_Sans',sans-serif] text-white">
    <button aria-label="Start" className="flex w-12 items-center justify-center">
      <Ico><path d="M0 2.300L6.500 1.400V7.500H0ZM7.500 1.200L16 0V7.500H7.500ZM0 8.500H6.500V14.600L0 13.700ZM7.500 8.500H16V16L7.500 14.800Z" fill="#fff" /></Ico>
    </button>
    <label className="flex h-10 w-[344px] items-center gap-3 border border-[#5c5c5c] bg-[#333] pl-[11px]">
      <Ico size={17}>
        <circle cx="10.500" cy="6.500" r="5.600" stroke="#ddd" strokeWidth="1.300" />
        <path d="M6.500 10.500L1 16" stroke="#ddd" strokeWidth="1.300" />
      </Ico>
      <input
        aria-label="Escribe aquí para buscar"
        placeholder="Escribe aquí para buscar"
        className="min-w-0 flex-1 bg-transparent text-[14px] text-white placeholder:text-[#d0d0d0]"
      />
    </label>
    <button aria-label="Cortana" className="flex w-12 items-center justify-center">
      <Ico><circle cx="8" cy="8" r="6.700" stroke="#fff" strokeWidth="2" /></Ico>
    </button>
    <button aria-label="Task view" className="mr-[3px] flex w-12 items-center justify-center">
      <Ico>
        <path d="M.5 0V3.500H11.500V0M.5 16V12.500H11.500V16M.5 5.500H11.500V10.500H.5ZM14.500 0V3M14.500 8V16" stroke="#fff" />
        <path d="M13 4H16V7H13Z" fill="#fff" />
      </Ico>
    </button>
    {APPS.map(({ name, icon: Icon, open, active }) => (
      <button
        key={name}
        aria-label={name}
        className={`mr-px flex w-12 flex-col items-center ${active ? 'bg-white/20' : ''}`}
      >
        <span className="flex h-[38px] items-center pt-[2px]"><Icon /></span>
        {open && <span className={`h-[2px] bg-[#76b9ed] ${active ? 'w-12' : 'w-10'}`} />}
      </button>
    ))}

    <div className="ml-auto flex items-center">
      <button aria-label="Show hidden icons">
        <Ico w={12} h={8}><path d="M1 7L6 1.500L11 7" stroke="#fff" strokeWidth="1.300" /></Ico>
      </button>
      <button aria-label="OneDrive" className="ml-[9px]">
        <Ico w={18} h={14}>
          <path d="M1 9C0 6 3 5 4 5C5 1 11 0 12 4C15 4 15 8 14 9Z" fill="#aab0b2" />
          <circle cx="12.500" cy="9.500" r="4.500" fill="#d8202c" />
          <path d="M10.500 7.500L14.500 11.500M14.500 7.500L10.500 11.500" stroke="#fff" strokeWidth="1.300" />
        </Ico>
      </button>
      <button aria-label="Network" className="ml-[10px]">
        <Ico w={14} h={14}>
          <path d="M1 12C1 6 6 1 12 1.500M4 13C4 8 8 4.500 12.500 5" stroke="#8d9a9d" strokeWidth="1.300" />
          <path d="M7 13C7 10 9 8 12.500 8" stroke="#fff" strokeWidth="1.300" />
          <circle cx="11" cy="12" r="1.500" fill="#fff" />
        </Ico>
      </button>
      <button aria-label="Volume" className="ml-[7px]">
        <Ico w={17} h={14}>
          <path d="M.5 5H3L7 1V13L3 9H.5Z" stroke="#fff" />
          <path d="M9 5C10 6 10 8 9 9M11.500 3C13.500 5 13.500 9 11.500 11M14 1C17 4 17 10 14 13" stroke="#fff" />
        </Ico>
      </button>
      <button aria-label="Pen" className="ml-[11px]">
        <Ico w={17} h={17}>
          <path d="M5 12L10 2C11 0 14 1 13 3L8 13L4 16ZM6 9C1 9 0 13 2 15M11 12C14 9 15 9 16 11" stroke="#fff" strokeWidth="1.200" />
        </Ico>
      </button>
      <button aria-label="Keyboard" className="ml-[11px]">
        <Ico w={23} h={14}>
          <path d="M.5 .5H22.500V13.500H.5Z" stroke="#fff" />
          <path d="M3 4.500H20M3 7.500H20" stroke="#fff" strokeDasharray="1.500 1.500" />
          <path d="M5 10.500H18" stroke="#fff" />
        </Ico>
      </button>
      <time className="w-[81px] text-center text-[11px] leading-[18px]">18:52<br />18/04/2020</time>
      <button aria-label="Notifications" className="ml-[7px] pt-[6px]">
        <Ico w={26} h={26}>
          <path d="M1 1H17V13H8L5 16V13H1Z" fill="#fff" />
          <path d="M3 4.500H15M3 7.500H15" stroke="#2a3c40" />
          <circle cx="16.500" cy="16" r="8" fill="#333" stroke="#777" />
          <text x="16.500" y="20" fontSize="11" fontWeight="600" textAnchor="middle" fill="#fff">2</text>
        </Ico>
      </button>
      <div className="ml-[9px] mr-1 h-10 border-l border-[#8b9799]" />
    </div>
  </footer>
);

const App: React.FC = () => (
  <div className="flex h-screen min-h-[600px] flex-col overflow-hidden bg-white font-['Liberation_Sans',Arial,sans-serif]">
    <TitleBar />
    <div className="flex min-h-0 flex-1">
      <PeoplePanel />
      <main className="flex min-w-0 flex-1 flex-col">
        <QuickBar />
        <Ribbon />
        <div className="relative flex min-h-0 flex-1 flex-col justify-between pb-1 pl-1 pt-1">
          <Model />
          <ViewCube />
          <div>
            <PanelBar title="BROWSER" open />
            <BrowserTree />
          </div>
          <div className="flex items-end">
            <PanelBar title="COMMENTS" />
            <div className="ml-[328px]"><NavBar /></div>
          </div>
        </div>
      </main>
    </div>
    <Taskbar />
  </div>
);

export default App;
